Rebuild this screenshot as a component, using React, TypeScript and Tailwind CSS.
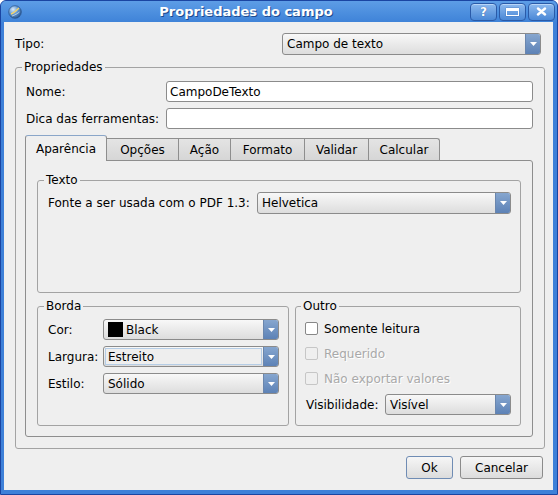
import React from "react";

function Arrow() {
  return (
    <div className="flex w-[15px] shrink-0 items-center justify-center border-l border-[#6a86ad] bg-gradient-to-b from-[#86a6cf] to-[#5d82b6]">
      <svg width="7" height="4" viewBox="0 0 7 4">
        <path d="M0 0H7L3.5 4Z" fill="#ffffff" />
      </svg>
    </div>
  );
}

function Combo({
  children,
  className = "",
  focus = false,
}: {
  children: React.ReactNode;
  className?: string;
  focus?: boolean;
}) {
  return (
    <div
      className={`flex overflow-hidden rounded-[3px] border border-[#8b8b8b] bg-gradient-to-b from-[#f8f8f8] to-[#dddddd] ${className}`}
    >
      {focus ? (
        <div className="m-[1px] flex flex-1 items-center border border-[#b5cde6] bg-[#eeeeee] pl-[2px]">
          {children}
        </div>
      ) : (
        <div className="flex flex-1 items-center pl-[4px]">{children}</div>
      )}
      <Arrow />
    </div>
  );
}

function Group({
  title,
  children,
  className = "",
}: {
  title: string;
  children: React.ReactNode;
  className?: string;
}) {
  return (
    <fieldset
      className={`rounded-[3px] border border-[#a3a3a3] ${className}`}
    >
      <legend className="ml-[-4px] px-[2px] leading-[15px]">{title}</legend>
      {children}
    </fieldset>
  );
}

function Check({ label, disabled = false }: { label: string; disabled?: boolean }) {
  return (
    <div className="flex h-[25px] items-center gap-[6px]">
      <div
        className={`h-[13px] w-[13px] rounded-[2px] border ${
          disabled ? "border-[#c6c6c6] bg-[#efefef]" : "border-[#878787] bg-white"
        }`}
      />
      <span
        className={
          disabled
            ? "text-[#a9a9a9] [text-shadow:1px_1px_0_#ffffff]"
            : "text-black"
        }
      >
        {label}
      </span>
    </div>
  );
}

function WinButton({ children }: { children: React.ReactNode }) {
  return (
    <div className="flex h-[18px] w-[27px] items-center justify-center rounded-[4px] border border-[#2a5aa8] bg-gradient-to-b from-[#8cb9ee] to-[#4a88d6] shadow-[inset_0_1px_0_#b8d6f8]">
      {children}
    </div>
  );
}

const tabs: { name: string; w: string }[] = [
  { name: "Opções", w: "w-[72px]" },
  { name: "Ação", w: "w-[52px]" },
  { name: "Formato", w: "w-[74px]" },
  { name: "Validar", w: "w-[64px]" },
  { name: "Calcular", w: "w-[71px]" },
];

export default function App() {
  return (
    <div className="flex h-[495px] w-[558px] flex-col overflow-hidden rounded-t-[6px] border border-[#1a45a2] bg-[#3e80d8] font-['DejaVu_Sans',sans-serif] text-[12px] text-black">
      {/* Title bar */}
      <div className="flex h-[21px] shrink-0 items-center bg-gradient-to-b from-[#5d9de6] to-[#3f83d8]">
        <div className="flex w-[21px] justify-end">
          <svg width="14" height="14" viewBox="0 0 14 14">
            <defs>
              <radialGradient id="g" cx="0.35" cy="0.3" r="0.8">
                <stop offset="0" stopColor="#dcebfa" />
                <stop offset="0.5" stopColor="#5e94cf" />
                <stop offset="1" stopColor="#234f8a" />
              </radialGradient>
            </defs>
            <circle cx="7" cy="7" r="6.3" fill="url(#g)" stroke="#24487a" strokeWidth="0.6" />
            <path d="M3 9 C6 8 8 6 11 3" stroke="#f3d36a" strokeWidth="1.4" fill="none" />
            <path d="M4 11 C7 10 9 9 11.5 7" stroke="#ffffff" strokeWidth="0.8" fill="none" opacity="0.7" />
          </svg>
        </div>
        <div className="flex-1 text-center text-[13px] font-bold text-white [text-shadow:1px_1px_0_#1d4a8e]">
          Propriedades do campo
        </div>
        <div className="mr-[2px] flex gap-[2px]">
          <WinButton>
            <span className="text-[12px] font-bold leading-none text-white [text-shadow:0_0_1px_#1d4a8e]">?</span>
          </WinButton>
          <WinButton>
            <div className="h-[8px] w-[13px] border border-white border-t-[3px] shadow-[0_0_1px_#1d4a8e]" />
          </WinButton>
          <WinButton>
            <svg width="11" height="9" viewBox="0 0 11 9">
              <path d="M2 1.5L9 7.5M9 1.5L2 7.5" stroke="#ffffff" strokeWidth="2.4" strokeLinecap="round" />
            </svg>
          </WinButton>
        </div>
      </div>

      {/* Body */}
      <div className="mb-[4px] ml-[3px] mr-[4px] flex flex-1 flex-col bg-[#efefef] pl-[11px] pr-[8px] pt-[11px]">
        <div className="flex h-[22px] items-center justify-between">
          <span>Tipo:</span>
          <Combo className="mr-[4px] h-[22px] w-[259px]">Campo de texto</Combo>
        </div>

        <Group title="Propriedades" className="mt-[5px] pb-[11px] pl-[10px] pr-[11px] pt-[6px]">
          <div className="flex h-[21px] items-center">
            <span className="w-[140px]">Nome:</span>
            <div className="flex h-[21px] flex-1 items-center rounded-[3px] border border-[#8b8b8b] bg-white pl-[3px]">
              CampoDeTexto
            </div>
          </div>
          <div className="mt-[6px] flex h-[21px] items-center">
            <span className="w-[140px]">Dica das ferramentas:</span>
            <div className="h-[21px] flex-1 rounded-[3px] border border-[#8b8b8b] bg-white" />
          </div>

          <div className="-ml-[1px] mt-[6px]">
            <div className="relative z-10 flex h-[25px] items-end">
              <div className="-mb-[1px] flex h-[26px] w-[82px] items-center justify-center rounded-t-[3px] border border-b-0 border-[#8e8e8e] border-t-[#8aa6c9] bg-[#efefef]">
                Aparência
              </div>
              {tabs.map((t) => (
                <div
                  key={t.name}
                  className={`flex h-[22px] ${t.w} items-center justify-center border border-b-0 border-l-0 border-[#8e8e8e] bg-gradient-to-b from-[#e4e4e4] to-[#d6d6d6] last:rounded-tr-[3px]`}
                >
                  {t.name}
                </div>
              ))}
            </div>
            <div className="rounded-b-[3px] rounded-tr-[3px] border border-[#8e8e8e] bg-[#efefef] px-[11px] pb-[10px] pt-[12px]">
              <Group title="Texto" className="h-[120px] pl-[10px] pr-[9px] pt-[4px]">
                <div className="flex h-[22px] items-center justify-between">
                  <span>Fonte a ser usada com o PDF 1.3:</span>
                  <Combo className="h-[22px] w-[254px]">Helvetica</Combo>
                </div>
              </Group>

              <div className="mt-[6px] flex gap-[6px]">
                <Group title="Borda" className="w-[252px] pl-[10px] pr-[9px] pt-[5px]">
                  <div className="flex h-[21px] items-center">
                    <span className="w-[55px]">Cor:</span>
                    <Combo className="h-[21px] flex-1">
                      <div className="mr-[3px] h-[15px] w-[15px] bg-black" />
                      Black
                    </Combo>
                  </div>
                  <div className="mt-[6px] flex h-[21px] items-center">
                    <span className="w-[55px]">Largura:</span>
                    <Combo className="h-[21px] flex-1" focus>
                      Estreito
                    </Combo>
                  </div>
                  <div className="mt-[6px] flex h-[21px] items-center">
                    <span className="w-[55px]">Estilo:</span>
                    <Combo className="h-[21px] flex-1">Sólido</Combo>
                  </div>
                </Group>

                <Group title="Outro" className="flex-1 pb-[10px] pl-[9px] pr-[9px] pt-[2px]">
                  <Check label="Somente leitura" />
                  <Check label="Requerido" disabled />
                  <Check label="Não exportar valores" disabled />
                  <div className="mt-[3px] flex h-[21px] items-center justify-between pl-[1px]">
                    <span>Visibilidade:</span>
                    <Combo className="h-[21px] w-[126px]">Visível</Combo>
                  </div>
                </Group>
              </div>
            </div>
          </div>
        </Group>

        <div className="mt-[7px] flex justify-end gap-[7px] pr-[2px]">
          <button className="h-[23px] w-[47px] rounded-[3px] border border-[#6f8cb4] bg-gradient-to-b from-[#f6f6f6] to-[#dcdcdc]">
            Ok
          </button>
          <button className="h-[23px] w-[83px] rounded-[3px] border border-[#8b8b8b] bg-gradient-to-b from-[#f6f6f6] to-[#dcdcdc]">
            Cancelar
          </button>
        </div>
      </div>
    </div>
  );
}
